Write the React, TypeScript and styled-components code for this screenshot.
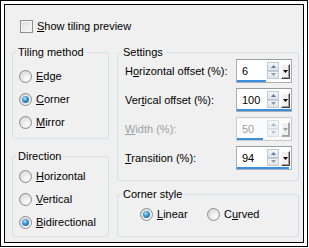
import React from "react";
import styled, { createGlobalStyle } from "styled-components";

const Global = createGlobalStyle`
  html, body { margin: 0; padding: 0; background: #fff; }
  body { font-family: "Liberation Sans", Arial, sans-serif; font-size: 11px; color: #000; }
`;

const Outer = styled.div`
  width: 308px;
  height: 247px;
  box-sizing: border-box;
  border: 1px solid #000;
  padding: 3px;
  background: #fff;
`;

const Panel = styled.div`
  height: 100%;
  box-sizing: border-box;
  border: 1px solid #000;
  background: #f0f0f0;
  padding: 15px 4px 5px 7px;
  display: flex;
  flex-direction: column;
`;

const CheckRow = styled.label`
  display: flex;
  align-items: center;
  gap: 4px;
  height: 13px;
  margin-left: 8px;
  line-height: 13px;
`;

const CheckBoxBox = styled.span`
  width: 13px;
  height: 13px;
  box-sizing: border-box;
  border: 1px solid #8e8f8f;
  background: linear-gradient(135deg, #dcdcdc 0%, #eeeeee 60%, #f8f8f8 100%);
  box-shadow: inset 0 0 0 1px #f4f4f4;
  flex: none;
`;

const Columns = styled.div`
  display: grid;
  grid-template-columns: 97px 182px;
  column-gap: 8px;
  margin-top: 13px;
  flex: 1;
`;

const Column = styled.div<{ $gap: number }>`
  display: flex;
  flex-direction: column;
  gap: ${(p) => p.$gap}px;
`;

const Group = styled.fieldset<{ $h: number }>`
  margin: 0;
  min-width: 0;
  height: ${(p) => p.$h}px;
  box-sizing: border-box;
  border: 1px solid #d5dfe5;
  border-radius: 3px;
  padding: 0;
  display: flex;
  flex-direction: column;
`;

const Legend = styled.legend`
  margin-left: 3px;
  padding: 0 2px;
  line-height: 12px;
`;

const GroupBody = styled.div<{ $pt: number; $pl: number }>`
  padding: ${(p) => p.$pt}px 0 0 ${(p) => p.$pl}px;
`;

const RadioList = styled.div`
  display: flex;
  flex-direction: column;
  gap: 10px;
`;

const RadioRowH = styled.div`
  display: flex;
  align-items: center;
`;

const RadioItem = styled.label<{ $w?: number }>`
  display: flex;
  align-items: center;
  gap: 4px;
  height: 13px;
  line-height: 13px;
  width: ${(p) => (p.$w ? `${p.$w}px` : "auto")};
`;

const RadioCircle = styled.span<{ $checked?: boolean }>`
  width: 13px;
  height: 13px;
  box-sizing: border-box;
  border-radius: 50%;
  border: 1px solid #8d8d8d;
  background: radial-gradient(circle at 65% 70%, #fdfdfd 0%, #ececec 40%, #cfcfcf 100%);
  display: flex;
  align-items: center;
  justify-content: center;
  flex: none;
  &::after {
    content: "";
    display: ${(p) => (p.$checked ? "block" : "none")};
    width: 7px;
    height: 7px;
    border-radius: 50%;
    background: radial-gradient(circle at 40% 35%, #b5e6fb 0%, #3f9ad6 40%, #0e4d7e 100%);
  }
`;

const U = styled.span`
  text-decoration: underline;
`;

const SettingsRows = styled.div`
  display: flex;
  flex-direction: column;
  gap: 5px;
  padding: 1px 6px 0 7px;
`;

const SettingRow = styled.div<{ $disabled?: boolean }>`
  display: flex;
  align-items: center;
  justify-content: space-between;
  height: 24px;
  color: ${(p) => (p.$disabled ? "#a0a0a0" : "#000")};
`;

const SpinBox = styled.div<{ $disabled?: boolean }>`
  width: 56px;
  height: 24px;
  box-sizing: border-box;
  border: 1px solid ${(p) => (p.$disabled ? "#c9c9c9" : "#abadb3")};
  border-top-color: ${(p) => (p.$disabled ? "#c9c9c9" : "#9a9da3")};
  background: ${(p) => (p.$disabled ? "#fbfbfb" : "#fff")};
  display: flex;
  flex-direction: column;
`;

const SpinTop = styled.div`
  display: flex;
  align-items: center;
  height: 19px;
  padding-left: 5px;
  padding-right: 1px;
`;

const SpinValue = styled.span<{ $disabled?: boolean }>`
  flex: 1;
  color: ${(p) => (p.$disabled ? "#a0a0a0" : "#000")};
  padding-top: 3px;
`;

const Arrows = styled.div<{ $disabled?: boolean }>`
  width: 12px;
  height: 17px;
  margin-top: 2px;
  margin-right: 2px;
  display: flex;
  flex-direction: column;
  opacity: ${(p) => (p.$disabled ? 0.55 : 1)};
`;

const ArrowBtn = styled.div`
  flex: 1;
  box-sizing: border-box;
  border: 1px solid #c2c9d0;
  background: linear-gradient(#f2f5f8, #dde4ea);
  display: flex;
  align-items: center;
  justify-content: center;
`;

const DropBtn = styled.div<{ $disabled?: boolean }>`
  width: 9px;
  height: 15px;
  margin-top: 3px;
  box-sizing: border-box;
  background: #f0f0f0;
  border-top: 1px solid #fff;
  border-left: 1px solid #fff;
  border-right: 1px solid ${(p) => (p.$disabled ? "#a8a8a8" : "#404040")};
  border-bottom: 1px solid ${(p) => (p.$disabled ? "#a8a8a8" : "#404040")};
  box-shadow: inset -1px -1px 0 #a0a0a0;
  display: flex;
  align-items: center;
  justify-content: center;
`;

const Bar = styled.div`
  height: 3px;
  margin-top: 1px;
  background: #3990de;
`;

type SpinProps = { value: string; frac: number; disabled?: boolean };

const Spin: React.FC<SpinProps> = ({ value, frac, disabled }) => (
  <SpinBox $disabled={disabled}>
    <SpinTop>
      <SpinValue $disabled={disabled}>{value}</SpinValue>
      <Arrows $disabled={disabled}>
        <ArrowBtn>
          <svg width="5" height="3" viewBox="0 0 5 3">
            <path d="M0 3 L2.5 0 L5 3 Z" fill="#5a7fa8" />
          </svg>
        </ArrowBtn>
        <ArrowBtn>
          <svg width="5" height="3" viewBox="0 0 5 3">
            <path d="M0 0 L2.5 3 L5 0 Z" fill="#8a9aab" />
          </svg>
        </ArrowBtn>
      </Arrows>
      <DropBtn $disabled={disabled}>
        <svg width="5" height="3" viewBox="0 0 5 3">
          <path d="M0 0 L2.5 3 L5 0 Z" fill={disabled ? "#a0a0a0" : "#000"} />
        </svg>
      </DropBtn>
    </SpinTop>
    <Bar style={{ width: `${Math.round(frac * 100)}%` }} />
  </SpinBox>
);

const Radio: React.FC<{ checked?: boolean; w?: number; children: React.ReactNode }> = ({
  checked,
  w,
  children,
}) => (
  <RadioItem $w={w}>
    <RadioCircle $checked={checked} />
    <span>{children}</span>
  </RadioItem>
);

export default function App() {
  return (
    <>
      <Global />
      <Outer>
        <Panel>
          <CheckRow>
            <CheckBoxBox />
            <span>
              <U>S</U>how tiling preview
            </span>
          </CheckRow>
          <Columns>
            <Column $gap={11}>
              <Group $h={93}>
                <Legend>Tiling method</Legend>
                <GroupBody $pt={12} $pl={6}>
                  <RadioList>
                    <Radio>
                      <U>E</U>dge
                    </Radio>
                    <Radio checked>
                      <U>C</U>orner
                    </Radio>
                    <Radio>
                      <U>M</U>irror
                    </Radio>
                  </RadioList>
                </GroupBody>
              </Group>
              <Group $h={87}>
                <Legend>Direction</Legend>
                <GroupBody $pt={8} $pl={6}>
                  <RadioList>
                    <Radio>
                      <U>H</U>orizontal
                    </Radio>
                    <Radio>
                      <U>V</U>ertical
                    </Radio>
                    <Radio checked>
                      <U>B</U>idirectional
                    </Radio>
                  </RadioList>
                </GroupBody>
              </Group>
            </Column>
            <Column $gap={7}>
              <Group $h={135}>
                <Legend>Settings</Legend>
                <SettingsRows>
                  <SettingRow>
                    <span>
                      H<U>o</U>rizontal offset (%):
                    </span>
                    <Spin value="6" frac={0.54} />
                  </SettingRow>
                  <SettingRow>
                    <span>
                      Ver<U>t</U>ical offset (%):
                    </span>
                    <Spin value="100" frac={1} />
                  </SettingRow>
                  <SettingRow $disabled>
                    <span>
                      <U>W</U>idth (%):
                    </span>
                    <Spin value="50" frac={0.48} disabled />
                  </SettingRow>
                  <SettingRow>
                    <span>
                      <U>T</U>ransition (%):
                    </span>
                    <Spin value="94" frac={0.96} />
                  </SettingRow>
                </SettingsRows>
              </Group>
              <Group $h={49}>
                <Legend>Corner style</Legend>
                <GroupBody $pt={8} $pl={22}>
                  <RadioRowH>
                    <Radio checked w={67}>
                      <U>L</U>inear
                    </Radio>
                    <Radio>
                      C<U>u</U>rved
                    </Radio>
                  </RadioRowH>
                </GroupBody>
              </Group>
            </Column>
          </Columns>
        </Panel>
      </Outer>
    </>
  );
}
